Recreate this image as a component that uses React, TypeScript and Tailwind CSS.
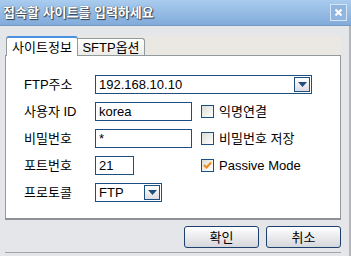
import React from "react";

const font = "font-['Liberation_Sans','Noto_Sans_CJK_KR',sans-serif]";

function Arrow() {
  return (
    <svg width="9" height="6" viewBox="0 0 9 6">
      <polygon points="0,0 9,0 4.5,5" fill="#1f4d7c" />
    </svg>
  );
}

function Select({ value, width }: { value: string; width: string }) {
  return (
    <div className={`${width} h-[19px] border border-[#1c4f80] bg-white flex items-center justify-between pl-[3px] pr-[1px]`}>
      <span className="text-[13px] text-black leading-none">{value}</span>
      <div className="w-[16px] h-[15px] border border-[#1c4f80] bg-gradient-to-b from-white to-[#dcdde3] flex items-center justify-center">
        <Arrow />
      </div>
    </div>
  );
}

function Input({ value, width }: { value: string; width: string }) {
  return (
    <div className={`${width} h-[19px] border border-[#1c4f80] bg-white flex items-center pl-[3px]`}>
      <span className="text-[13px] text-black leading-none">{value}</span>
    </div>
  );
}

function Check({ checked, label }: { checked?: boolean; label: string }) {
  return (
    <div className="flex items-center gap-[5px]">
      <div className="w-[13px] h-[13px] border border-[#1c4f80] bg-gradient-to-br from-[#dcdcd6] to-white flex items-center justify-center">
        {checked && (
          <svg width="9" height="9" viewBox="0 0 9 9">
            <path d="M1 4 L3.5 6.5 L8 1.5" stroke="#f08a1c" strokeWidth="2" fill="none" />
          </svg>
        )}
      </div>
      <span className="text-[13px] text-black leading-none">{label}</span>
    </div>
  );
}

function Row({ label, children }: { label: string; children: React.ReactNode }) {
  return (
    <div className="flex items-center h-[19px]">
      <div className="w-[71px] text-[13px] text-black leading-none">{label}</div>
      {children}
    </div>
  );
}

export default function App() {
  return (
    <div className={`${font} w-[351px] h-[256px] bg-[#e5e6ea] relative overflow-hidden flex flex-col`}>
      {/* Title bar */}
      <div className="h-[26px] shrink-0 bg-gradient-to-b from-[#a9ccef] to-[#82abda] border-b border-[#7198c6] flex items-center justify-between pl-[3px] pr-[4px]">
        <span className="text-[13px] font-bold text-white leading-none [text-shadow:0_0_1px_#2c3b4d,1px_1px_1px_#2c3b4d]">
          접속할 사이트를 입력하세요
        </span>
        <div className="w-[17px] h-[17px] border border-[#d6e6f6] bg-[#8fb5e0] flex items-center justify-center">
          <svg width="9" height="9" viewBox="0 0 9 9">
            <path d="M1.5 1.5 L7.5 7.5 M7.5 1.5 L1.5 7.5" stroke="white" strokeWidth="2.2" />
          </svg>
        </div>
      </div>

      <div className="flex-1 flex flex-col pl-[5px] pr-[8px] border-r-2 border-[#b3b5bb]">
        {/* Tabs */}
        <div className="mt-[10px] h-[19px] ml-[1px] bg-[#ebe8e4] flex items-end w-[335px]">
          <div className="h-[20px] w-[72px] bg-white border-t-2 border-[#4a90e0] border-x border-x-[#919b9c] rounded-t-[3px] flex items-center justify-center -mb-px relative z-10">
            <span className="text-[13px] text-black leading-none">사이트정보</span>
          </div>
          <div className="h-[17px] w-[67px] bg-gradient-to-b from-white to-[#ecebe6] border border-[#919b9c] border-b-0 border-l-0 rounded-tr-[3px] flex items-center justify-center">
            <span className="text-[13px] text-black leading-none">SFTP옵션</span>
          </div>
        </div>

        {/* Panel */}
        <div className="h-[165px] w-[336px] bg-white border border-[#919b9c] border-b-2 border-b-[#8e9096] pl-[18px] pt-[19px] flex flex-col gap-[8px]">
          <Row label="FTP주소">
            <Select value="192.168.10.10" width="w-[217px]" />
          </Row>
          <Row label="사용자 ID">
            <Input value="korea" width="w-[97px]" />
            <div className="ml-[9px]">
              <Check label="익명연결" />
            </div>
          </Row>
          <Row label="비밀번호">
            <Input value="*" width="w-[97px]" />
            <div className="ml-[9px]">
              <Check label="비밀번호 저장" />
            </div>
          </Row>
          <Row label="포트번호">
            <div className="w-[97px]">
              <Input value="21" width="w-[39px]" />
            </div>
            <div className="ml-[9px] -mt-[1px]">
              <Check checked label="Passive Mode" />
            </div>
          </Row>
          <Row label="프로토콜">
            <Select value="FTP" width="w-[67px]" />
          </Row>
        </div>

        {/* Buttons */}
        <div className="flex justify-end gap-[7px] mt-[6px] w-[336px]">
          <button className="w-[75px] h-[22px] rounded-[3px] border border-[#1c3f6e] bg-gradient-to-b from-white to-[#d6d7dc] text-[13px] text-black leading-none">
            확인
          </button>
          <button className="w-[75px] h-[22px] rounded-[3px] border border-[#1c3f6e] bg-gradient-to-b from-white to-[#d6d7dc] text-[13px] text-black leading-none">
            취소
          </button>
        </div>
        <div className="mt-auto mb-[3px] h-px bg-[#a2a4aa]" />
      </div>
    </div>
  );
}
